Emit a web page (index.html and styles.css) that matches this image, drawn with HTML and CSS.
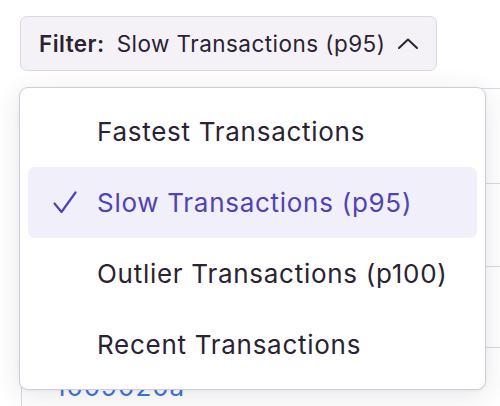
FILE: index.html
```html
<!DOCTYPE html>
<html>
<head>
<meta charset="utf-8">
<link rel="stylesheet" href="styles.css">
</head>
<body>
<div class="page">
  <button class="filter-btn" type="button">
    <span class="filter-label">Filter:</span>
    <span class="filter-value">Slow Transactions (p95)</span>
    <svg class="chevron" width="20" height="11" viewBox="0 0 20 11"><path d="M1 10 L10 1.5 L19 10" fill="none" stroke="#2b2233" stroke-width="2" stroke-linecap="round" stroke-linejoin="round"/></svg>
  </button>
  <div class="panel">
    <div class="row row-head"></div>
    <div class="row row-a"></div>
    <div class="row row-b"></div>
    <div class="row row-c"><a class="txn-link">1009020a</a></div>
  </div>
  <div class="menu">
    <div class="item"><span class="check"></span><span class="label">Fastest Transactions</span></div>
    <div class="item selected"><span class="check"><svg width="24" height="23" viewBox="0 0 24 23"><path d="M1.5 12.5 L8.5 21 L22.5 1.5" fill="none" stroke="#4f44b3" stroke-width="2.2" stroke-linecap="round" stroke-linejoin="round"/></svg></span><span class="label">Slow Transactions (p95)</span></div>
    <div class="item"><span class="check"></span><span class="label">Outlier Transactions (p100)</span></div>
    <div class="item"><span class="check"></span><span class="label">Recent Transactions</span></div>
  </div>
</div>
</body>
</html>
```
FILE: styles.css
```css
html, body {
  margin: 0;
  padding: 0;
  background: #ffffff;
  overflow: hidden;
}
body {
  font-family: Inter, "Noto Sans", sans-serif;
  color: #2b2233;
}
.page {
  position: relative;
  width: 500px;
  height: 406px;
  overflow: hidden;
  padding: 16px 0 0 20px;
  box-sizing: border-box;
}
.filter-btn {
  display: flex;
  align-items: center;
  height: 55px;
  box-sizing: border-box;
  padding: 0 18px 0 18px;
  background: #f4f2f7;
  border: 1px solid #dcd7e2;
  border-radius: 7px;
  font-family: inherit;
  font-size: 22.5px;
  letter-spacing: 0.45px;
  color: #2b2233;
}
.filter-label {
  font-weight: 600;
  margin-right: 12px;
}
.filter-value {
  font-weight: 400;
}
.chevron {
  margin-left: 13px;
  display: block;
}
.panel {
  margin: 17px 0 0 1px;
  border-left: 1px solid #dcd7e2;
  border-top: 1px solid #dcd7e2;
  border-radius: 6px 0 0 0;
}
.row {
  border-bottom: 1px solid #dcd7e2;
}
.row-head { height: 94px; }
.row-a { height: 82px; }
.row-b { height: 80px; }
.row-c {
  height: 58px;
  border-bottom: none;
  padding: 23px 0 0 33px;
  box-sizing: border-box;
}
.txn-link {
  color: #3d74db;
  font-size: 26px;
  letter-spacing: 0.9px;
}
.menu {
  position: absolute;
  left: 19px;
  top: 87px;
  width: 467px;
  box-sizing: border-box;
  padding: 8px 8px 9px 8px;
  background: #ffffff;
  border: 1px solid #d2cbdb;
  border-radius: 9px;
  box-shadow: 0 6px 28px rgba(43, 34, 51, 0.11), 0 1px 3px rgba(43, 34, 51, 0.06);
}
.item {
  display: flex;
  align-items: center;
  height: 71px;
  padding-left: 25px;
  border-radius: 7px;
  font-size: 26px;
  letter-spacing: 0.72px;
  color: #2b2233;
}
.item.selected {
  background: #f1effa;
  color: #4f44b3;
}
.check {
  width: 24px;
  height: 23px;
  margin-right: 20px;
  flex: none;
}
.check svg { display: block; }
```
